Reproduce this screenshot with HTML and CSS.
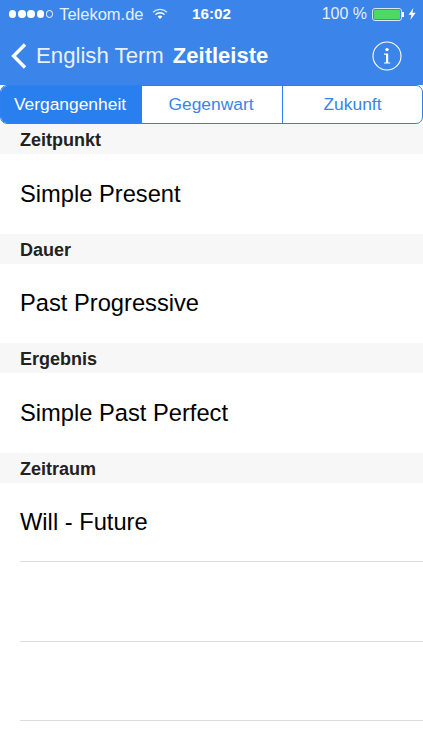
FILE: index.html
```html
<!DOCTYPE html>
<html lang="de">

<head>
    <meta charset="UTF-8">
    <meta name="viewport" content="width=device-width, initial-scale=1.0">
    <title>Zeitleiste</title>

    <link rel="stylesheet" href="styles.css">
</head>

<body>
    <header class="top">
        <div class="status">
            <div class="status-left">
                <span class="dots">
                    <i class="dot"></i><i class="dot"></i><i class="dot"></i><i class="dot"></i><i class="dot dot-empty"></i>
                </span>
                <span class="carrier">Telekom.de</span>
                <svg class="wifi" width="16" height="12" viewBox="0 0 16 12">
                    <path d="M1 4.2 A10 10 0 0 1 15 4.2" fill="none" stroke="#dbe8fb" stroke-width="1.2" />
                    <path d="M3.4 6.6 A6.6 6.6 0 0 1 12.6 6.6" fill="none" stroke="#fff" stroke-width="1.3" />
                    <path d="M5.6 8.6 A3.4 3.4 0 0 1 10.4 8.6 L8 11 Z" fill="#fff" />
                </svg>
            </div>
            <span class="clock">16:02</span>
            <div class="status-right">
                <span class="percent">100 %</span>
                <span class="battery"><span class="battery-fill"></span></span>
                <span class="battery-cap"></span>
                <svg class="bolt" width="8" height="12" viewBox="0 0 8 12">
                    <path d="M5.4 0 L0.6 6.8 H3.4 L2.4 12 L7.6 4.8 H4.4 Z" fill="#fff" />
                </svg>
            </div>
        </div>
        <nav class="nav">
            <svg class="back" width="18" height="28" viewBox="0 0 18 28">
                <path d="M16 2.5 L4.6 14 L16 25.5" fill="none" stroke="#fff" stroke-width="3.4" />
            </svg>
            <span class="nav-back">English Term</span>
            <span class="nav-title">Zeitleiste</span>
            <svg class="info" width="30" height="30" viewBox="0 0 30 30">
                <circle cx="15" cy="15" r="14" fill="none" stroke="#fff" stroke-width="1.1" />
                <circle cx="15" cy="8.6" r="1.7" fill="#fff" />
                <path d="M12 12.6 H16.2 V21.4 H18.2 V22.6 H12 V21.4 H14 V13.8 H12 Z" fill="#fff" />
            </svg>
        </nav>
    </header>

    <div class="tabs">
        <div class="tab tab-active">Vergangenheit</div>
        <div class="tab">Gegenwart</div>
        <div class="tab">Zukunft</div>
    </div>

    <main>
        <h3 class="section">Zeitpunkt</h3>
        <div class="row">Simple Present</div>
        <h3 class="section">Dauer</h3>
        <div class="row">Past Progressive</div>
        <h3 class="section">Ergebnis</h3>
        <div class="row">Simple Past Perfect</div>
        <h3 class="section">Zeitraum</h3>
        <div class="row row-line">Will - Future</div>
        <div class="row row-line"></div>
        <div class="row row-line"></div>
    </main>
</body>

</html>
```

FILE: styles.css
```css
html, body {
    margin: 0;
    padding: 0;
    height: 750px;
    overflow: hidden;
}

body {
    background-color: #fff;
    color: #000;
    font-family: "Liberation Sans", Arial, sans-serif;
}

.top {
    background-color: #3a84ea;
    color: #fff;
    height: 85px;
    box-sizing: border-box;
}

.status {
    display: flex;
    align-items: center;
    justify-content: space-between;
    height: 28px;
    padding: 0 7px 0 9px;
    font-size: 16px;
    position: relative;
}

.status-left,
.status-right {
    display: flex;
    align-items: center;
}

.dots {
    display: flex;
    gap: 1.8px;
    margin-right: 6px;
}

.dot {
    width: 7.4px;
    height: 7.4px;
    border-radius: 50%;
    background-color: #fff;
    box-sizing: border-box;
}

.dot-empty {
    background: none;
    border: 1px solid #fff;
}

.carrier {
    color: #e6effc;
    font-size: 16.5px;
}

.wifi {
    margin-left: 8px;
}

.clock {
    position: absolute;
    left: 192px;
    top: 5px;
    font-weight: bold;
    font-size: 15.2px;
}

.percent {
    color: #e6effc;
    margin-right: 5px;
}

.battery {
    display: block;
    width: 30px;
    height: 13px;
    padding: 1px;
    border: 1px solid #d8e6fa;
    border-radius: 3px;
    box-sizing: border-box;
}

.battery-fill {
    display: block;
    height: 100%;
    border-radius: 1px;
    background-color: #4cd964;
}

.battery-cap {
    width: 2px;
    height: 5px;
    background-color: #fff;
    margin-right: 4px;
}

.nav {
    display: flex;
    align-items: center;
    height: 56px;
    padding: 0 21px 0 9px;
}

.back {
    margin-right: 9px;
}

.nav-back {
    font-size: 22.2px;
    color: #e8f0fd;
}

.nav-title {
    font-size: 22px;
    font-weight: bold;
    margin-left: 9px;
}

.info {
    margin-left: auto;
}

.tabs {
    display: grid;
    grid-template-columns: 141px 141px 1fr;
    height: 39px;
    box-sizing: border-box;
    border: 1px solid #2f80ec;
    border-radius: 7px;
    background-color: #fff;
    overflow: hidden;
}

.tab {
    display: flex;
    align-items: center;
    justify-content: center;
    padding-right: 2px;
    font-size: 17.4px;
    color: #3a84ea;
    border-right: 1px solid #2f80ec;
}

.tab:last-child {
    border-right: 0;
    padding-right: 0;
}

.tab-active {
    background-color: #2a7fee;
    color: #fff;
}

.section {
    margin: 0;
    height: 30px;
    line-height: 32px;
    padding-left: 20px;
    background-color: #f7f7f7;
    color: #222;
    font-size: 18px;
    font-weight: bold;
}

.row {
    height: 79.5px;
    box-sizing: border-box;
    display: flex;
    align-items: center;
    padding: 1px 0 0 20px;
    font-size: 23.7px;
    position: relative;
}

.row-line::after {
    content: "";
    position: absolute;
    left: 20px;
    right: 0;
    bottom: 0;
    height: 1px;
    background-color: #dcdcdc;
}
```
